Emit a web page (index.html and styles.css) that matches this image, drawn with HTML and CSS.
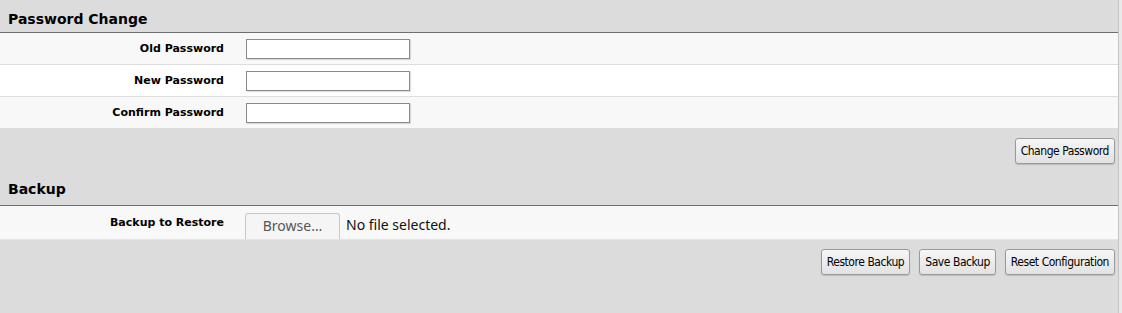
FILE: index.html
```html
<!DOCTYPE html>
<html>
<head>
<meta charset="utf-8">
<link rel="stylesheet" href="styles.css">
</head>
<body>
<div class="frame">
  <div class="main">
    <h2 class="section-title">Password Change</h2>
    <div class="table">
      <div class="row odd">
        <div class="label">Old Password</div>
        <div class="field"><input class="text" type="password"></div>
      </div>
      <div class="row even">
        <div class="label">New Password</div>
        <div class="field"><input class="text" type="password"></div>
      </div>
      <div class="row odd">
        <div class="label">Confirm Password</div>
        <div class="field"><input class="text" type="password"></div>
      </div>
    </div>
    <div class="actions first">
      <button class="btn">Change Password</button>
    </div>
    <h2 class="section-title backup">Backup</h2>
    <div class="table">
      <div class="row odd tall">
        <div class="label">Backup to Restore</div>
        <div class="field file">
          <span class="browse">Browse…</span>
          <span class="nofile">No file selected.</span>
        </div>
      </div>
    </div>
    <div class="actions">
      <button class="btn">Restore Backup</button>
      <button class="btn">Save Backup</button>
      <button class="btn">Reset Configuration</button>
    </div>
  </div>
  <div class="edge"></div>
</div>
</body>
</html>
```

FILE: styles.css
```css
html, body {
  margin: 0;
  padding: 0;
  background: #dcdcdc;
  height: 313px;
  overflow: hidden;
}
.frame {
  display: flex;
  height: 313px;
}
.main {
  width: 1118px;
  flex: none;
}
.edge {
  flex: 1;
  border-left: 1px solid #c4c4c4;
  background: #e9e9e9;
}
.section-title {
  box-sizing: border-box;
  margin: 0;
  padding: 11px 0 0 8px;
  height: 33px;
  font-family: "DejaVu Sans", sans-serif;
  font-weight: bold;
  font-size: 14px;
  line-height: 16px;
  color: #000;
  border-bottom: 1px solid #6e6e6e;
}
.section-title.backup {
  margin-top: 9px;
  padding-top: 8px;
}
.table {
  display: flex;
  flex-direction: column;
}
.row {
  display: flex;
  align-items: center;
  height: 31px;
  border-bottom: 1px solid #dedede;
}
.row.odd { background: #f8f8f8; }
.row.even { background: #ffffff; }
.row.tall {
  height: 33px;
  border-bottom: 1px solid #e4e4e4;
}
.label {
  width: 224px;
  text-align: right;
  font-family: "DejaVu Sans", sans-serif;
  font-weight: bold;
  font-size: 11px;
  color: #000;
}
.row .label { margin-top: -1px; }
.field {
  margin-left: 22px;
  display: flex;
  align-items: center;
}
.text {
  width: 164px;
  height: 20px;
  box-sizing: border-box;
  border: 1px solid #8a8a8a;
  background: #fff;
  box-shadow: 1px 1px 1px rgba(0,0,0,0.12);
  margin: 1px 0 0 0;
  padding: 0;
}
.field.file {
  margin-left: 21px;
  align-self: flex-end;
  height: 26px;
  align-items: flex-start;
}
.browse {
  display: inline-block;
  width: 95px;
  height: 26px;
  box-sizing: border-box;
  border: 1px solid #c8c8c8;
  border-bottom: none;
  border-radius: 3px 3px 0 0;
  background: #f5f5f5;
  color: #555;
  font-family: "Noto Sans", sans-serif;
  font-size: 14px;
  line-height: 24px;
  text-align: center;
}
.nofile {
  margin-left: 6px;
  font-family: "Noto Sans", sans-serif;
  font-size: 14px;
  line-height: 24px;
  color: #111;
}
.actions {
  display: flex;
  justify-content: flex-end;
  gap: 9px;
  padding: 9px 3px 0 0;
}
.btn {
  height: 26px;
  margin: 0;
  padding: 0 5px;
  border: 1px solid #9a9a9a;
  border-radius: 3px;
  background: linear-gradient(#f6f6f6, #e2e2e2);
  box-shadow: 0 1px 1px rgba(0,0,0,0.15);
  font-family: "DejaVu Sans Condensed", "DejaVu Sans", sans-serif;
  font-size: 12px;
  letter-spacing: -0.45px;
  color: #000;
}
```
